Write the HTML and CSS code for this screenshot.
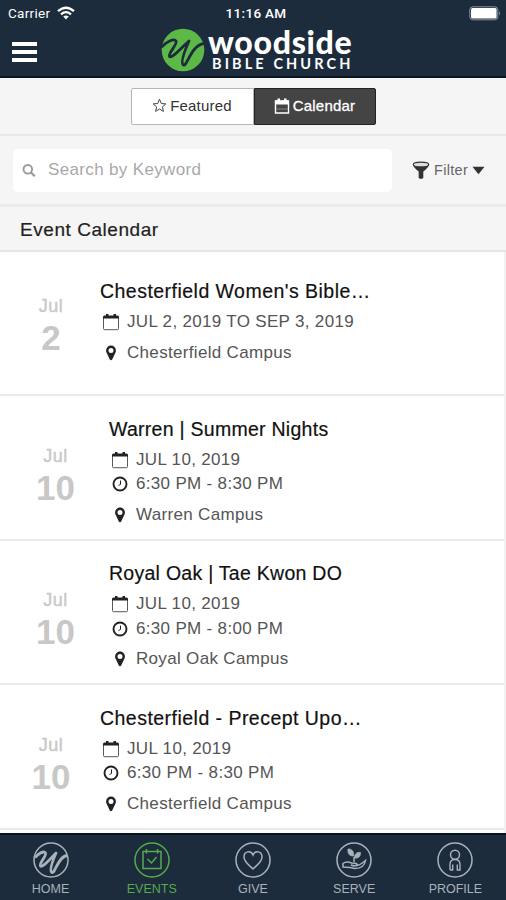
FILE: index.html
```
<!DOCTYPE html>
<html lang="en">
<head>
    <meta charset="UTF-8">
    <meta name="viewport" content="width=device-width, initial-scale=1.0">
    <title>Woodside Bible Church - Events</title>
    <link rel="stylesheet" href="styles.css">
</head>
<body>
    <svg class="sprite" width="0" height="0">
        <symbol id="calendar" viewBox="0 0 18 18">
            <path d="M1.500 5v10.500q0 1.200 1.200 1.200h12.600q1.200 0 1.200-1.200V5" fill="none" stroke="currentColor" stroke-width="1" opacity=".75"/>
            <path d="M1 5.500V4q0-1.500 1.500-1.500H4V1h2.500v1.500h5V1H14v1.500h1.500Q17 2.500 17 4v1.500z" fill="currentColor"/>
        </symbol>
        <symbol id="clock" viewBox="0 0 18 18">
            <circle cx="9" cy="9" r="6.500" fill="none" stroke="currentColor" stroke-width="1.900"/>
            <path d="M9.500 5.500v4l-2 1" fill="none" stroke="currentColor" stroke-width="1"/>
        </symbol>
        <symbol id="pin" viewBox="0 0 18 18">
            <path d="M9 1.500a4.900 4.900 0 0 0-4.900 4.900c0 1.200.3 1.900.8 2.900L7.800 15.500q1.200 1.500 2.400 0L13.100 9.300c.5-1 .8-1.700.8-2.900A4.900 4.900 0 0 0 9 1.500zM9 4a2.500 2.500 0 1 1 0 5 2.500 2.500 0 0 1 0-5z" fill="currentColor" fill-rule="evenodd"/>
        </symbol>
    </svg>

    <div id="app">
        <header class="header">
            <div class="status">
                <span class="carrier">Carrier
                    <svg width="18" height="14" viewBox="0 0 18 14" fill="none" stroke="#fff" stroke-width="2.300">
                        <path d="M1 5.200q8-7 16 0M4 8.300q5-4.300 10 0"/>
                        <path d="M9 13.500L6.200 10.600q2.800-2.300 5.600 0z" fill="#fff" stroke="none"/>
                    </svg>
                </span>
                <span class="time">11:16 AM</span>
                <svg class="battery" width="32" height="15" viewBox="0 0 32 15">
                    <rect x=".8" y=".8" width="28" height="13" rx="3" fill="none" stroke="#8b949d"/>
                    <rect x="2" y="2" width="25.600" height="10.600" rx="1.500" fill="#fff"/>
                    <path d="M30 5q2 2.300 0 4.600z" fill="#8b949d"/>
                </svg>
            </div>
            <div class="brand-bar">
                <div class="menu"><span></span><span></span><span></span></div>
                <div class="brand">
                    <svg width="44" height="44" viewBox="0 0 44 44">
                        <circle cx="22" cy="22" r="21.300" fill="#5cb947"/>
                        <path d="M1 18.500C5 14 13 10 15 13S6.500 26 8.500 28.500 20 20 28 13C24 22 19 35 22.500 37S30 17 43 15.500" fill="none" stroke="#1c2c3c" stroke-width="2.800" stroke-linecap="round" stroke-linejoin="round"/>
                    </svg>
                    <div class="brand-text">
                        <div class="name">woodside</div>
                        <div class="sub">BIBLE CHURCH</div>
                    </div>
                </div>
            </div>
        </header>

        <div class="tabs">
            <div class="tab">
                <svg width="15" height="15" viewBox="0 0 15 15"><path d="M7.500 1.300l1.800 4.200 4.500.4-3.400 3 1 4.500-3.900-2.400-3.900 2.400 1-4.500-3.400-3 4.500-.4z" fill="none" stroke="#444" stroke-width="1"/></svg>
                <span>Featured</span>
            </div>
            <div class="tab active">
                <svg width="16" height="16" viewBox="0 0 16 16"><path d="M1.500 3h13v12h-13z" fill="none" stroke="#fff" stroke-width="1.400"/><path d="M1 2.500h2.500V.5H6v2h4v-2h2.500v2H15V6.500H1z" fill="#fff"/><path d="M2 11h12" stroke="#999" stroke-width=".7"/></svg>
                <span>Calendar</span>
            </div>
        </div>

        <div class="search-bar">
            <div class="search">
                <svg width="14" height="14" viewBox="0 0 14 14" fill="none" stroke="#999"><circle cx="5.800" cy="6.300" r="4.300" stroke-width="1.900"/><path d="M9 9.500l3.800 3.800" stroke-width="2.200"/></svg>
                <span>Search by Keyword</span>
            </div>
            <div class="filter">
                <svg width="18" height="19" viewBox="0 0 18 19"><path d="M1 3.500Q1 6 6.700 10.500v6.500q2.200 1.700 4.600 0v-6.500Q17 6 17 3.500z" fill="#333"/><ellipse cx="9" cy="3.500" rx="7.800" ry="2.400" fill="#ddd" stroke="#333" stroke-width="1.100"/></svg>
                <span>Filter</span>
                <svg width="13" height="9" viewBox="0 0 13 9"><path d="M.5.800h12L6.500 8.300z" fill="#333"/></svg>
            </div>
        </div>

        <h2>Event Calendar</h2>

        <div class="events">
            <div class="event">
                <div class="date"><span class="month">Jul</span><span class="day">2</span></div>
                <div class="info">
                    <h3>Chesterfield Women's Bible…</h3>
                    <div class="line"><svg><use href="#calendar"/></svg><span>JUL 2, 2019 TO SEP 3, 2019</span></div>
                    <div class="line place"><svg><use href="#pin"/></svg><span>Chesterfield Campus</span></div>
                </div>
            </div>
            <div class="event timed wide">
                <div class="date"><span class="month">Jul</span><span class="day">10</span></div>
                <div class="info">
                    <h3>Warren | Summer Nights</h3>
                    <div class="line"><svg><use href="#calendar"/></svg><span>JUL 10, 2019</span></div>
                    <div class="line"><svg><use href="#clock"/></svg><span>6:30 PM - 8:30 PM</span></div>
                    <div class="line place"><svg><use href="#pin"/></svg><span>Warren Campus</span></div>
                </div>
            </div>
            <div class="event timed wide">
                <div class="date"><span class="month">Jul</span><span class="day">10</span></div>
                <div class="info">
                    <h3>Royal Oak | Tae Kwon DO</h3>
                    <div class="line"><svg><use href="#calendar"/></svg><span>JUL 10, 2019</span></div>
                    <div class="line"><svg><use href="#clock"/></svg><span>6:30 PM - 8:00 PM</span></div>
                    <div class="line place"><svg><use href="#pin"/></svg><span>Royal Oak Campus</span></div>
                </div>
            </div>
            <div class="event timed">
                <div class="date"><span class="month">Jul</span><span class="day">10</span></div>
                <div class="info">
                    <h3>Chesterfield - Precept Upo…</h3>
                    <div class="line"><svg><use href="#calendar"/></svg><span>JUL 10, 2019</span></div>
                    <div class="line"><svg><use href="#clock"/></svg><span>6:30 PM - 8:30 PM</span></div>
                    <div class="line place"><svg><use href="#pin"/></svg><span>Chesterfield Campus</span></div>
                </div>
            </div>
        </div>

        <nav class="nav">
            <div class="nav-item">
                <svg viewBox="0 0 36 36"><circle cx="18" cy="18" r="17"/><path d="M2 15.500C6 11 11 8.500 12.500 11S5.500 22 7.500 24 17 17 23 11C20 18 16 29 19 30.500S25 14.500 34 13.500" stroke-width="2.800" stroke-linejoin="round"/></svg>
                <span>HOME</span>
            </div>
            <div class="nav-item active">
                <svg viewBox="0 0 36 36"><circle cx="18" cy="18" r="17"/><path d="M9 9.500h18v17H9zM12.500 7v4.500M23.500 7v4.500M13.500 17l4 4 5-6"/></svg>
                <span>EVENTS</span>
            </div>
            <div class="nav-item">
                <svg viewBox="0 0 36 36"><circle cx="18" cy="18" r="17"/><path d="M18 27C14 23 9 20 9 15c0-6 7-7 9-2 2-5 9-4 9 2 0 5-5 8-9 12z"/></svg>
                <span>GIVE</span>
            </div>
            <div class="nav-item">
                <svg viewBox="0 0 36 36"><circle cx="18" cy="18" r="17"/><path d="M18 20v-5"/><path d="M17.500 14c-4 0-6-2-5.500-7 4 0 6 2 5.500 7zM18.500 16c0-4 2-6 6-5.500 0 4-2 6-6 5.500z" fill="#a9b2bb" stroke-width=".8"/><path d="M7 21.500c3.500-2.500 6-1.500 8.500-.5l5 .5c2 1.500-1.500 3-5.500 1.500 5 2.500 10-.5 14.500-4.500-1 6-5.500 8-10.500 8l-5-1-7-.5z"/></svg>
                <span>SERVE</span>
            </div>
            <div class="nav-item">
                <svg viewBox="0 0 36 36"><circle cx="18" cy="18" r="17"/><circle cx="18" cy="12.800" r="4.500"/><path d="M13 28v-5.500q0-5 5-5t5 5V28h-2.700v-5.500M13 28h2.700v-5.500" stroke-width="1.400"/></svg>
                <span>PROFILE</span>
            </div>
        </nav>
    </div>
</body>
</html>
```
FILE: styles.css
```
body, html {
    height: 100%;
    margin: 0;
    padding: 0;
    font-family: "Liberation Sans", Arial, sans-serif;
    overflow: hidden;
}
* {
    box-sizing: border-box;
}
.sprite {
    position: absolute;
}
#app {
    display: flex;
    flex-direction: column;
    height: 100vh;
    background-color: #f5f5f5;
}
svg {
    display: block;
    flex: none;
}
.header {
    height: 78px;
    background-color: #1c2c3c;
    border-bottom: 2px solid #071421;
    color: white;
}
.status {
    display: grid;
    grid-template-columns: 1fr auto 1fr;
    align-items: center;
    height: 26px;
    padding: 0 5px 0 8px;
    font-family: Roboto, sans-serif;
    font-size: 13.5px;
    line-height: 26px;
    letter-spacing: 0.3px;
}
.carrier {
    display: flex;
    align-items: center;
    gap: 7px;
}
.time {
    padding-left: 3px;
    font-weight: 500;
}
.battery {
    justify-self: end;
}
.brand-bar {
    display: flex;
    height: 50px;
    padding-left: 12px;
}
.menu {
    display: flex;
    flex-direction: column;
    gap: 4px;
    width: 25px;
    padding-top: 16px;
}
.menu span {
    height: 4px;
    background-color: white;
}
.brand {
    display: flex;
    gap: 3px;
    margin-left: 124px;
    padding-top: 2px;
}
.brand-text {
    font-family: Lato, sans-serif;
}
.name {
    height: 29px;
    font-size: 32px;
    font-weight: 900;
    line-height: 27px;
    letter-spacing: 0.7px;
}
.sub {
    padding-left: 4px;
    font-size: 14.5px;
    font-weight: 700;
    line-height: 14px;
    letter-spacing: 3.1px;
    white-space: nowrap;
}
.tabs {
    display: flex;
    justify-content: center;
    height: 58px;
    padding: 10px 0 9px;
    border-bottom: 2px solid #e8e8e8;
}
.tab {
    display: flex;
    justify-content: center;
    align-items: center;
    gap: 3px;
    width: 123px;
    height: 37px;
    padding-bottom: 2px;
    border: 1px solid #b5b5b5;
    border-radius: 2px 0 0 2px;
    background-color: white;
    color: #333;
    font-size: 15px;
    letter-spacing: 0.2px;
}
.tab.active {
    width: 122px;
    border-color: #222;
    border-radius: 0 2px 2px 0;
    background-color: #444;
    color: white;
    -webkit-text-stroke: 0.3px white;
}
.search-bar {
    display: flex;
    align-items: center;
    height: 71px;
    padding: 0 20px 0 13px;
    border-bottom: 3px solid #ebebeb;
}
.search {
    display: flex;
    align-items: center;
    gap: 12px;
    width: 379px;
    height: 43px;
    padding-left: 9px;
    border-radius: 5px;
    background-color: white;
    color: #a9a9a9;
    font-size: 17px;
    letter-spacing: 0.35px;
}
.filter {
    display: flex;
    align-items: center;
    margin-left: 20px;
    gap: 4px;
    color: #666;
    font-size: 14.5px;
    letter-spacing: 0.3px;
}
h2 {
    height: 45px;
    margin: 0;
    padding-left: 20px;
    border-bottom: 2px solid #e5e5e5;
    color: #222;
    font-size: 19px;
    font-weight: normal;
    line-height: 45px;
    letter-spacing: 0.55px;
    -webkit-text-stroke: 0.2px #222;
}
.events {
    flex: 1;
    overflow: hidden;
    background-color: white;
    border-right: 2px solid #f2f2f2;
}
.event {
    display: flex;
    height: 144.5px;
    border-bottom: 2px solid #ebebeb;
}
.event:first-child {
    height: 144px;
}
.date {
    display: flex;
    flex-direction: column;
    align-items: center;
    width: 102px;
    padding-top: 42px;
    color: #c8c8c8;
}
.month {
    font-size: 18px;
    line-height: 24px;
    letter-spacing: 0.5px;
    -webkit-text-stroke: 0.4px #c8c8c8;
}
.day {
    font-size: 35px;
    font-weight: bold;
    line-height: 39px;
}
.info {
    padding-top: 27px;
}
.timed .date {
    padding-top: 47.5px;
}
.timed .info {
    padding-top: 20.5px;
}
.wide .date {
    width: 111px;
}
h3 {
    margin: 0 0 6px -2px;
    color: #111;
    font-size: 19.5px;
    font-weight: normal;
    line-height: 25px;
    letter-spacing: 0.47px;
    white-space: nowrap;
    -webkit-text-stroke: 0.2px #111;
}
.wide h3 {
    letter-spacing: 0.27px;
}
.line {
    display: flex;
    align-items: center;
    gap: 7px;
    height: 24.5px;
    color: #555;
    font-size: 17px;
    letter-spacing: 0.32px;
}
.line svg {
    width: 18px;
    height: 18px;
    color: #222;
}
.place {
    margin-top: 6px;
}
.nav {
    display: grid;
    grid-template-columns: repeat(5, 1fr);
    height: 67px;
    border-top: 2px solid #071421;
    background-color: #1c2c3c;
}
.nav-item {
    display: flex;
    flex-direction: column;
    align-items: center;
    padding-top: 7px;
    color: #a9b2bb;
    font-size: 12.5px;
    line-height: 22px;
}
.nav-item svg {
    width: 36px;
    height: 36px;
    fill: none;
    stroke: currentColor;
    stroke-width: 1.5px;
}
.nav-item.active {
    color: #56aa49;
}
```
